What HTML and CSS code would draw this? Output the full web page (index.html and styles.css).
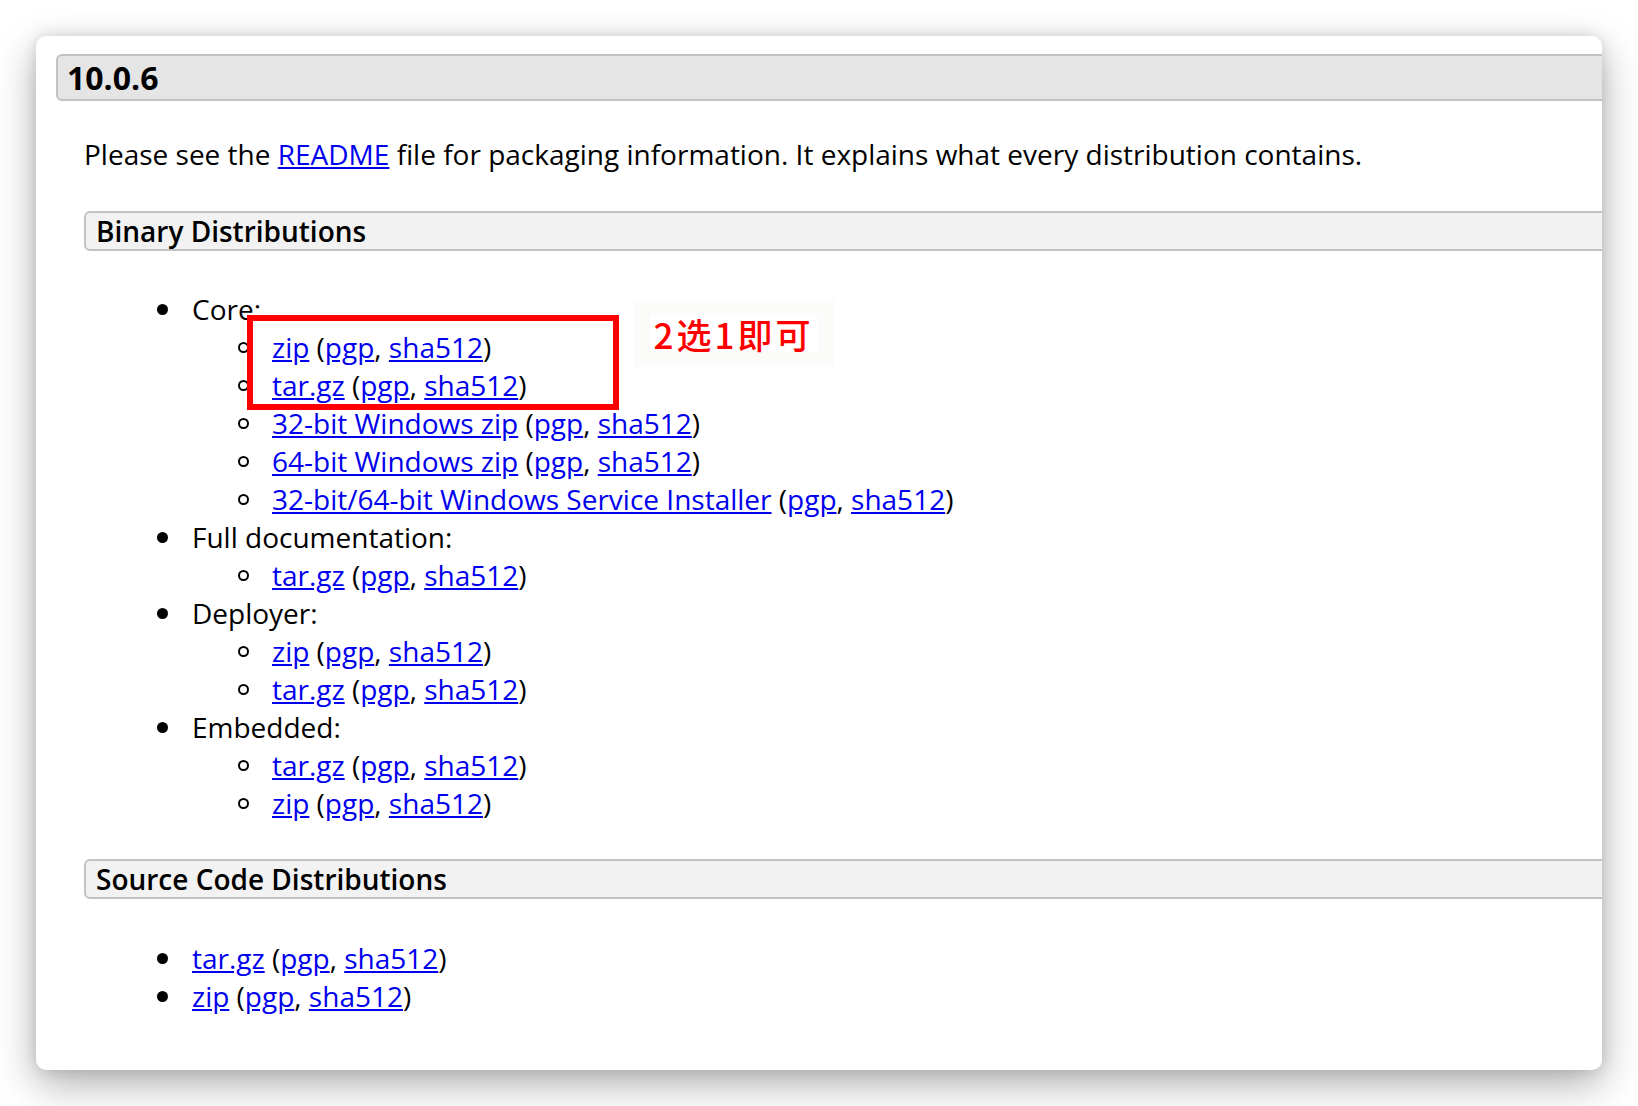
FILE: index.html
```html
<!DOCTYPE html>
<html lang="en">
<head>
<meta charset="utf-8">
<title>Apache Tomcat 10.0.6</title>
<link rel="stylesheet" href="styles.css">
</head>
<body>
<div class="stage">
  <div class="window">
    <h2 class="ver">10.0.6</h2>
    <div class="section">
      <p class="intro">Please see the <a href="#">README</a> file for packaging information. It explains what every distribution contains.</p>
      <h3 class="sub">Binary Distributions</h3>
      <ul class="dist">
        <li>Core:
          <ul>
            <li><a href="#">zip</a> (<a href="#">pgp</a>, <a href="#">sha512</a>)</li>
            <li><a href="#">tar.gz</a> (<a href="#">pgp</a>, <a href="#">sha512</a>)</li>
            <li><a href="#">32-bit Windows zip</a> (<a href="#">pgp</a>, <a href="#">sha512</a>)</li>
            <li><a href="#">64-bit Windows zip</a> (<a href="#">pgp</a>, <a href="#">sha512</a>)</li>
            <li><a href="#">32-bit/64-bit Windows Service Installer</a> (<a href="#">pgp</a>, <a href="#">sha512</a>)</li>
          </ul>
        </li>
        <li>Full documentation:
          <ul>
            <li><a href="#">tar.gz</a> (<a href="#">pgp</a>, <a href="#">sha512</a>)</li>
          </ul>
        </li>
        <li>Deployer:
          <ul>
            <li><a href="#">zip</a> (<a href="#">pgp</a>, <a href="#">sha512</a>)</li>
            <li><a href="#">tar.gz</a> (<a href="#">pgp</a>, <a href="#">sha512</a>)</li>
          </ul>
        </li>
        <li>Embedded:
          <ul>
            <li><a href="#">tar.gz</a> (<a href="#">pgp</a>, <a href="#">sha512</a>)</li>
            <li><a href="#">zip</a> (<a href="#">pgp</a>, <a href="#">sha512</a>)</li>
          </ul>
        </li>
      </ul>
      <h3 class="sub sub-src">Source Code Distributions</h3>
      <ul class="dist dist-src">
        <li><a href="#">tar.gz</a> (<a href="#">pgp</a>, <a href="#">sha512</a>)</li>
        <li><a href="#">zip</a> (<a href="#">pgp</a>, <a href="#">sha512</a>)</li>
      </ul>
    </div>
    <div class="mark-box"></div>
    <div class="mark-label"><span class="mark-text">2选1即可</span></div>
  </div>
</div>
</body>
</html>
```

FILE: styles.css
```css
html, body {
  margin: 0;
  padding: 0;
  background: #ffffff;
}

.stage {
  padding: 36px 0 0 36px;
  width: 1638px;
  height: 1106px;
  box-sizing: border-box;
  overflow: hidden;
}

.window {
  position: relative;
  width: 1566px;
  height: 1034px;
  background: #ffffff;
  border-radius: 10px;
  overflow: hidden;
  box-shadow: 0 14px 40px rgba(0, 0, 0, 0.32), 0 0 14px rgba(0, 0, 0, 0.12);
  font-family: "Open Sans", "Liberation Sans", sans-serif;
  color: #000;
  font-size: 28px;
  line-height: 38px;
}

.ver {
  margin: 18px -40px 0 20px;
  padding: 0 0 0 9px;
  font-size: 32px;
  line-height: 43px;
  font-weight: 700;
  background: #e5e5e5;
  border: 2px solid #c2c2c2;
  border-radius: 6px;
}

.section {
  padding: 0 0 0 48px;
}

.intro {
  margin: 34px 0 0 0;
}

a {
  color: #0000ee;
  text-decoration: underline;
}

.sub {
  margin: 38px -40px 0 0;
  padding: 0 0 0 10px;
  font-size: 28px;
  line-height: 36px;
  font-weight: 600;
  background: #f2f2f2;
  border: 2px solid #c3c3c3;
  border-radius: 6px;
}

.dist {
  margin: 39px 0 0 0;
  padding: 0 0 0 108px;
  list-style: none;
}

.dist > li::before {
  content: "";
  display: inline-block;
  width: 11px;
  height: 11px;
  border-radius: 50%;
  background: #000;
  margin: 0 24px 0 -35px;
  vertical-align: 5px;
}

.dist ul {
  margin: 0;
  padding: 0 0 0 80px;
  list-style: none;
}

.dist ul > li::before {
  content: "";
  display: inline-block;
  width: 11px;
  height: 11px;
  box-sizing: border-box;
  border: 2px solid #000;
  border-radius: 50%;
  margin: 0 23px 0 -34px;
  vertical-align: 5px;
}

.sub-src {
  margin-top: 37px;
}

.dist-src {
  margin-top: 40px;
}

.mark-box {
  position: absolute;
  left: 211px;
  top: 279px;
  width: 372px;
  height: 95px;
  box-sizing: border-box;
  border: 6px solid #ff0000;
}

.mark-label {
  position: absolute;
  left: 597px;
  top: 264px;
  width: 201px;
  height: 67px;
  background: #fbfbfa;
  display: flex;
  align-items: center;
  justify-content: center;
}

.mark-text {
  background: #ffffff;
  color: #ff0000;
  font-family: "Noto Sans CJK SC", "Noto Sans", sans-serif;
  font-size: 35px;
  line-height: 37px;
  font-weight: 500;
  padding: 0 4px;
  letter-spacing: 3px;
}
```
